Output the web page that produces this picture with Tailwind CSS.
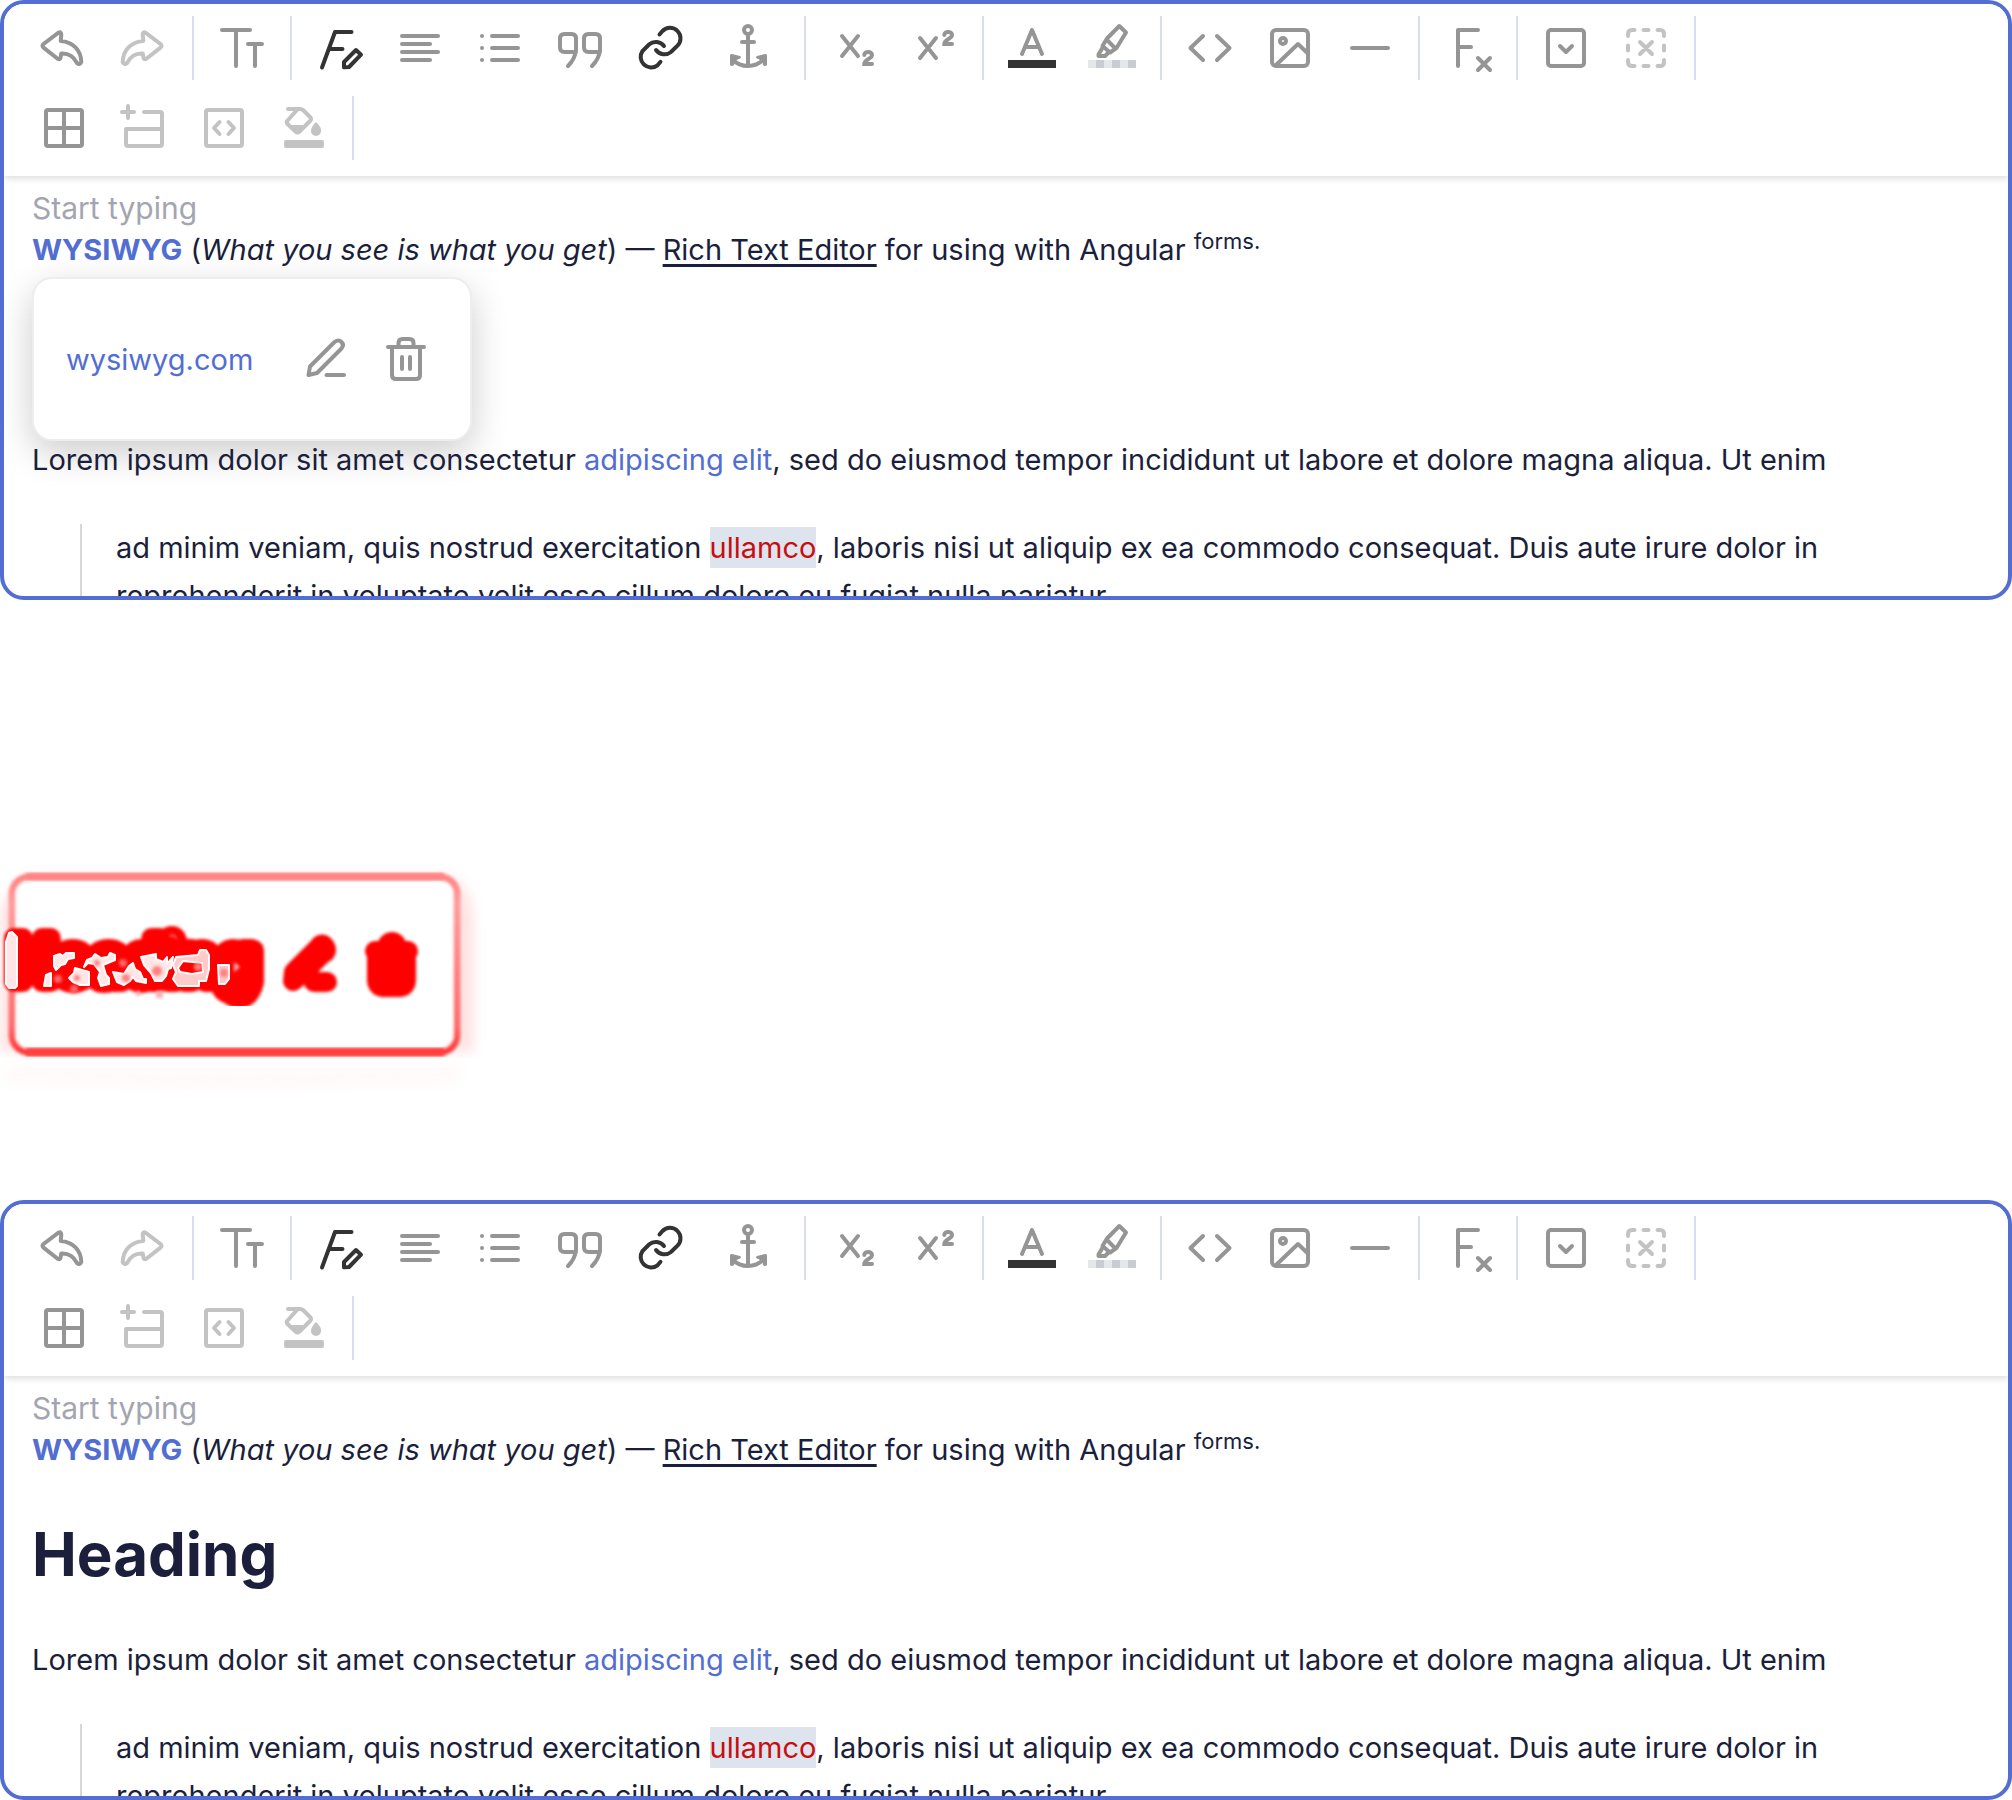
<!DOCTYPE html>
<html lang="en">
<head>
<meta charset="utf-8">
<meta name="viewport" content="width=device-width, initial-scale=1">
<title>Rich Text Editor</title>
<script src="https://cdn.jsdelivr.net/npm/@tailwindcss/browser@4"></script>
</head>
<body class="bg-white font-['Inter',sans-serif] text-[29px] text-[#1b1f3b]">

<template id="toolbar">
  <div role="toolbar" aria-label="Formatting" class="relative flex flex-wrap gap-y-4 bg-white px-3 pt-3 pb-4 text-[#959595] shadow-[0_3px_6px_rgba(0,0,0,0.12)] [&_button]:block [&_button]:h-16 [&_button]:w-16 [&_svg]:mx-auto [&_svg]:size-16 [&_svg]:fill-none [&_svg]:stroke-current [&_svg]:stroke-4 [&>div]:ml-4 [&>div]:flex [&>div]:gap-4 [&>div]:border-r-2 [&>div]:border-[#d9def3] [&>div]:pr-4">
    <div>
      <button type="button" aria-label="Undo"><svg viewBox="0 0 64 64" stroke-linejoin="round"><path d="M26.5 16.7 11.5 28Q9.5 29.8 11.5 31.6L26 43Q28.2 44 28.6 41.5L29.2 37.5C37 37 42 41 45 47Q47.5 49.5 49.3 46C49 34 41 26 28.7 25L29.3 18.5Q29 15.3 26.5 16.7Z"/></svg></button>
      <button type="button" aria-label="Redo" class="text-[#c3c3c3]"><svg viewBox="0 0 64 64" stroke-linejoin="round"><path transform="translate(60 0) scale(-1 1)" d="M26.5 16.7 11.5 28Q9.5 29.8 11.5 31.6L26 43Q28.2 44 28.6 41.5L29.2 37.5C37 37 42 41 45 47Q47.5 49.5 49.3 46C49 34 41 26 28.7 25L29.3 18.5Q29 15.3 26.5 16.7Z"/></svg></button>
    </div>
    <div>
      <button type="button" aria-label="Font size"><svg viewBox="0 0 64 64" stroke-linecap="round"><path d="M12 14H40M26 14V50M38 28H52M45 28V50"/></svg></button>
    </div>
    <div>
      <button type="button" aria-label="Font style" class="text-[#333]"><svg viewBox="0 0 64 64" stroke-linecap="round" stroke-linejoin="round"><path d="M43.5 16H27L14 51.5M21 33H34.5M48 34 53 38.7 41 51 36 51.3 36 46Z"/></svg></button>
      <button type="button" aria-label="Align"><svg viewBox="0 0 64 64" stroke-linecap="round"><path d="M14 20H50M14 28H42M14 36H50M14 44H42"/></svg></button>
      <button type="button" aria-label="List"><svg viewBox="0 0 64 64" stroke-linecap="round"><path d="M24 20H50M24 32H50M24 44H50M14 20h.01M14 32h.01M14 44h.01"/></svg></button>
      <button type="button" aria-label="Quote"><svg viewBox="0 0 64 64" stroke-linecap="round"><path d="M28 36H16.500Q12 36 12 31.5V22.5Q12 18 16.5 18H23.5Q28 18 28 22.5V34Q27 43 20 50M52 36H40.5Q36 36 36 31.5V22.5Q36 18 40.5 18H47.5Q52 18 52 22.5V34Q51 43 44 50"/></svg></button>
      <button type="button" aria-label="Link" class="text-[#333]"><svg viewBox="0 0 64 64" stroke-linecap="round"><path d="M31.5 18.5 34.5 15A10.5 10.5 0 0 1 49.5 29.7L43 36A10.5 10.5 0 0 1 28 34M36 30A10.5 10.5 0 0 0 21 28.5L14.5 35A10.5 10.5 0 0 0 29.5 49.3L32.5 45.8"/></svg></button>
      <button type="button" aria-label="Anchor" class="w-20!"><svg viewBox="0 0 64 64" stroke-linecap="round"><circle cx="32" cy="14" r="4"/><path d="M32 18V50M26 26H38M17 44Q23 50 32 50T47 44"/><path class="fill-current stroke-none" d="M14 39.5Q14 37.500 16 38L24 40Q26 41.5 24 42.5L18.5 45 18 49Q16 51 14 49ZM51 39.5Q51 37.5 49 38L41 40Q39 41.5 41 42.5L46.5 45 47 49Q49 51 51 49Z"/></svg></button>
    </div>
    <div>
      <button type="button" aria-label="Subscript"><svg viewBox="0 0 64 64" stroke-linecap="round"><path d="M20 20 36 40M36 20 20 40M42.3 39C42.3 35 50 35 50 39S42.3 43 42.3 48H50"/></svg></button>
      <button type="button" aria-label="Superscript"><svg viewBox="0 0 64 64" stroke-linecap="round"><path d="M18 22 34 42M34 22 18 42M42.3 19C42.3 15 50 15 50 19S42.3 23 42.3 28H50"/></svg></button>
    </div>
    <div>
      <button type="button" aria-label="Text color"><svg viewBox="0 0 64 64" stroke-linecap="round" stroke-linejoin="round"><path d="M22 38 32 14 42 38M25 31H39"/><path class="fill-[#333] stroke-none" d="M8 44h48v8H8z"/></svg></button>
      <button type="button" aria-label="Highlight"><svg viewBox="0 0 64 64" stroke-linejoin="round"><path d="M39.3 10 46 16.5 36.5 32 30 36.5 22.5 30 27 22.5ZM27 24 35 32M23 31 18.5 38.5 18.5 40H25L29 36"/><path class="fill-[#e6e7e9] stroke-none" d="M8 44h48v8H8z"/><path class="fill-[#c9ccd2] stroke-none" d="M16 44h8v8h-8zM32 44h8v8h-8zM48 44h8v8h-8z"/></svg></button>
    </div>
    <div>
      <button type="button" aria-label="Code"><svg viewBox="0 0 64 64" stroke-linecap="round" stroke-linejoin="round"><path d="M25 20 12.5 32 25 44M39 20 51.5 32 39 44"/></svg></button>
      <button type="button" aria-label="Image"><svg viewBox="0 0 64 64" stroke-linejoin="round"><rect x="14" y="14" width="36" height="36" rx="4"/><circle cx="25" cy="25" r="3"/><path d="M17 50 40 28 51 38.5"/></svg></button>
      <button type="button" aria-label="Horizontal rule"><svg viewBox="0 0 64 64" stroke-linecap="round"><path d="M14 32H50"/></svg></button>
    </div>
    <div>
      <button type="button" aria-label="Clear format"><svg viewBox="0 0 64 64" stroke-linecap="round" stroke-linejoin="round"><path d="M42 14H22V50M22 31H35M42 42 54 54M54 42 42 54"/></svg></button>
    </div>
    <div>
      <button type="button" aria-label="Add details"><svg viewBox="0 0 64 64" stroke-linecap="round" stroke-linejoin="round"><rect x="14" y="14" width="36" height="36" rx="3"/><path d="M26 30 32 36 38 30"/></svg></button>
      <button type="button" aria-label="Remove details" class="text-[#c3c3c3]"><svg viewBox="0 0 64 64" stroke-linecap="round"><path d="M14 20V18Q14 14 18 14H20.5M43.5 14H46Q50 14 50 18V20M50 44V46Q50 50 46 50H43.5M20.5 50H18Q14 50 14 46V44M29.5 14H34.5M29.5 50H34.5M14 29.5V34.5M50 29.5V34.5M26 26 38 38M38 26 26 38"/></svg></button>
    </div>
    <div>
      <button type="button" aria-label="Table"><svg viewBox="0 0 64 64"><rect x="14" y="14" width="36" height="36" rx="2"/><path d="M32 14V50M14 32H50"/></svg></button>
      <button type="button" aria-label="Add row" class="text-[#c3c3c3]"><svg viewBox="0 0 64 64" stroke-linecap="round" stroke-linejoin="round"><path d="M10 16H22M16 10V22M32 16H48Q50 16 50 18V48Q50 50 48 50H16Q14 50 14 48V33H50"/></svg></button>
      <button type="button" aria-label="Embed" class="text-[#c3c3c3]"><svg viewBox="0 0 64 64" stroke-linecap="round" stroke-linejoin="round"><rect x="14" y="14" width="36" height="36" rx="2"/><path d="M27.5 26 22 32 27.5 38M36.5 26 42 32 36.5 38"/></svg></button>
      <button type="button" aria-label="Cell color" class="text-[#c3c3c3]"><svg viewBox="0 0 64 64" stroke-linecap="round" stroke-linejoin="round"><path d="M16 13H28Q30 13 31 14L38 21Q40 23 38.5 24.5L27.5 35.5Q25.5 37.5 23.5 35.5L15.5 28Q14 26 15.5 24.5L25 14"/><path class="fill-current stroke-none" d="M15 29H36L26 38ZM44 26Q49.5 31 49 35A5 5 0 0 1 39 35Q39 31 44 26Z"/><rect class="fill-current stroke-none" x="12" y="44" width="40" height="8" rx="2"/></svg></button>
    </div>
  </div>
</template>

<template id="intro">
  <p class="text-[30px] text-[#a4a5b1]">Start typing</p>
  <p><b class="text-[#526ed3]">WYSIWYG</b> (<i>What you see is what you get</i>) — <u class="decoration-[3px] underline-offset-4">Rich Text Editor</u> for using with Angular <sup class="text-[22px]">forms.</sup></p>
</template>

<template id="rest">
  <p class="mt-12">Lorem ipsum dolor sit amet consectetur <a href="#" class="text-[#526ed3]">adipiscing elit</a>, sed do eiusmod tempor incididunt ut labore et dolore magna aliqua. Ut enim</p>
  <blockquote class="mx-12 mt-11 border-l-2 border-[#d8d8d8] pl-[34px] leading-12">ad minim veniam, quis nostrud exercitation <span class="bg-[#dde4ed] py-[3px] text-[#c70e10]">ullamco</span>, laboris nisi ut aliquip ex ea commodo consequat. Duis aute irure dolor in reprehenderit in voluptate velit esse cillum dolore eu fugiat nulla pariatur.</blockquote>
</template>

<main>
  <section aria-label="Editor with link menu" class="relative h-[600px] overflow-hidden rounded-3xl border-4 border-[#526ed3]">
    <div data-part="toolbar"></div>
    <div class="px-7 pt-3 leading-[41px]">
      <div data-part="intro"></div>
      <div class="mt-12 h-[73px]"></div>
      <div class="absolute top-[273px] left-7 flex w-[440px] items-center justify-between rounded-[20px] border-2 border-[#ededed] bg-white px-8 py-12 shadow-[0_12px_36px_rgba(0,0,0,0.2)]">
        <a href="#" class="text-[#526ed3]">wysiwyg.com</a>
        <div class="flex gap-4 text-[#959595] [&_svg]:size-16 [&_svg]:fill-none [&_svg]:stroke-current [&_svg]:stroke-4">
          <button type="button" aria-label="Edit link"><svg viewBox="0 0 64 64" stroke-linecap="round" stroke-linejoin="round"><path d="M14.5 48 16 39.5 40.5 15Q44.5 12 47.5 15T47.5 21.5L23 46ZM32.5 48H50"/></svg></button>
          <button type="button" aria-label="Remove link"><svg viewBox="0 0 64 64" stroke-linecap="round" stroke-linejoin="round"><path d="M14 20H50M24.5 20V16Q24.5 12 28.5 12H35.5Q39.5 12 39.5 16V20M18 20V48Q18 52 22 52H42Q46 52 46 48V20M28 30V42M36 30V42"/></svg></button>
        </div>
      </div>
      <div data-part="rest" class="relative"></div>
    </div>
  </section>

  <section aria-label="Difference" class="h-[600px] pt-[260px]">
    <svg viewBox="0 0 500 250" class="block h-[250px] w-[500px] overflow-hidden" role="img" aria-label="Changed region">
      <defs>
        <filter id="soft" x="-10%" y="-10%" width="120%" height="120%"><feGaussianBlur stdDeviation="1.5"/></filter>
        <filter id="glow" x="-20%" y="-20%" width="140%" height="140%"><feGaussianBlur stdDeviation="6"/></filter>
        <linearGradient id="edge" x1="0" y1="0" x2="0" y2="1"><stop offset="0" stop-color="#ff8585"/><stop offset=".15" stop-color="#ff9c9c"/><stop offset=".85" stop-color="#ff6c6c"/><stop offset="1" stop-color="#ff3a3a"/></linearGradient>
      </defs>
      <path d="M0 50Q10 24 30 16H450Q472 28 474 60V192H0Z" fill="#ffd0d0" opacity=".6" filter="url(#glow)"/>
      <path d="M0 198H480V250H0Z" fill="#fff"/>
      <path d="M4 204H462V224Q240 238 4 224Z" fill="#fffafa" filter="url(#glow)"/>
      <rect x="12" y="17" width="445" height="175" rx="17" fill="#fff" stroke="url(#edge)" stroke-width="7" filter="url(#soft)"/>
      <path d="M26 14.500H444" stroke="#ff8585" stroke-width="6" filter="url(#soft)"/>
      <path d="M26 13H444V20H26Z" fill="#ff8585" opacity=".9" filter="url(#soft)"/>
      <path d="M26 188H444V196H26Z" fill="#ff4040" filter="url(#soft)"/>
      <g fill="#f00" stroke="#f00" stroke-linecap="round" stroke-linejoin="round" filter="url(#soft)">
        <text x="10" y="122" font-family="Inter, sans-serif" font-weight="700" font-size="60" stroke-width="20">Heading</text>
        <path stroke="none" d="M15 95H245V120H15Z"/>
        <path stroke-width="20" d="M244 90H254V122Q250 138 240 138T231 132V98"/>
        <path stroke-width="20" d="M293 121 294 112 319 87Q322 82 325 87T322 94L304 112ZM314 122H327"/>
        <path stroke-width="20" d="M375 91H408M388 84Q392 80 396 84V90"/>
        <path stroke-width="18" d="M376 92V120Q376 127 383 128H400Q407 127 407 120V92ZM385 100H398V120H385Z"/>
      </g>
      <g fill="#ffe5e5" stroke="#fff" stroke-width="2" stroke-linejoin="round">
        <path d="M6 82 9 73 12 72 17 77V126L15 128H9L6 124Z"/>
        <path d="M44 126 46 115 51 113V126ZM54 96 60 94 63 96 66 93H74V98L68 99 65 104 61 105 56 110 54 106ZM69 118 74 113 75 108 89 112V125H80L73 122ZM84 107 87 100 92 98 95 94 101 98 108 97 110 93 115 95V100L103 105 106 115 109 118V124L101 126 98 118 100 112 94 104 88 103Z"/>
        <path d="M113 112 124 114 129 106 133 103 135 109 140 112 143 119 146 119V123L136 121 133 117 130 121 124 125 117 122ZM141 97 156 94V99L163 102 167 97V104L173 97 171 108 168 109 166 116 162 121H155L151 113 144 105Z"/>
        <path fill="#ffcaca" fill-rule="evenodd" d="M173 105 176 97 198 95 200 90H206L209 95V109L206 121 199 121V126H178L173 119 176 112ZM178 108 183 101 202 103 203 112 192 114 180 112Z"/>
        <path fill="#ffc5c5" d="M218 105H229V119L225 124H219Z"/>
      </g>
      <g fill="#ffb0b0" filter="url(#soft)"><path d="M156 131H163V138H156ZM136 131H140V136H136ZM234 102 240 107 234 112Z"/><circle cx="74" cy="129" r="4" fill="#f66"/><circle cx="58" cy="119" r="4" fill="#f66"/><circle cx="123" cy="103" r="4" fill="#f66"/></g>
      <g fill="#ff8080" filter="url(#soft)"><circle cx="77" cy="118" r="3"/><circle cx="97" cy="103" r="3"/><circle cx="126" cy="118" r="4"/><circle cx="157" cy="111" r="5"/><circle cx="198" cy="107" r="4"/><circle cx="224" cy="113" r="4"/></g>
    </svg>
  </section>

  <section aria-label="Editor" class="relative h-[600px] overflow-hidden rounded-3xl border-4 border-[#526ed3]">
    <div data-part="toolbar"></div>
    <div class="px-7 pt-3 leading-[41px]">
      <div data-part="intro"></div>
      <h1 class="mt-12 text-[60px] leading-[73px] font-bold">Heading</h1>
      <div data-part="rest"></div>
    </div>
  </section>
</main>

<script>
  document.querySelectorAll('[data-part]').forEach(function (slot) {
    slot.append(document.getElementById(slot.dataset.part).content.cloneNode(true));
  });
</script>
</body>
</html>
